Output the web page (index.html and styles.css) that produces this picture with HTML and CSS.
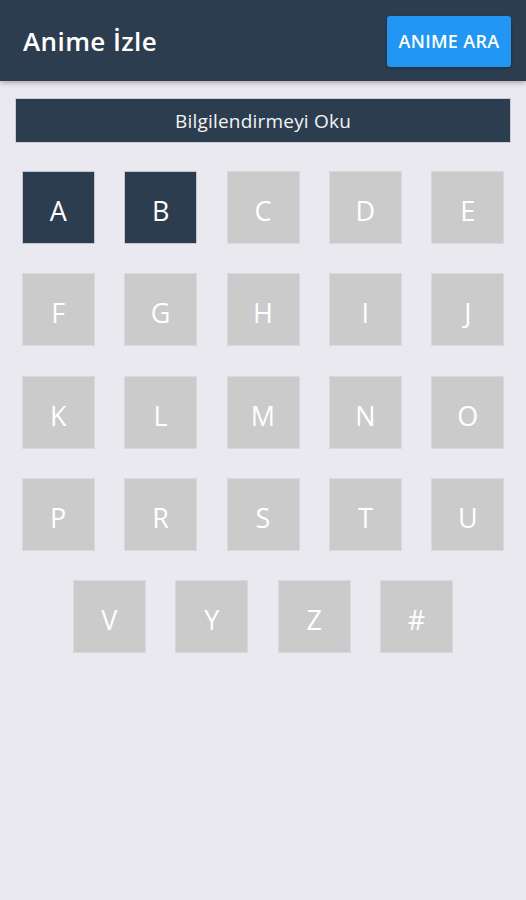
FILE: index.html
```html
<!DOCTYPE html>
<html lang="tr">
<head>
<meta charset="utf-8">
<title>Anime İzle</title>
<link rel="stylesheet" href="styles.css">
</head>
<body>
<header class="appbar">
  <h1 class="appbar-title">Anime İzle</h1>
  <button class="search-btn">ANIME ARA</button>
</header>
<main class="content">
  <div class="info-bar">Bilgilendirmeyi Oku</div>
  <div class="letters">
    <div class="tile tile-active">A</div>
    <div class="tile tile-active">B</div>
    <div class="tile">C</div>
    <div class="tile">D</div>
    <div class="tile">E</div>
    <div class="tile">F</div>
    <div class="tile">G</div>
    <div class="tile">H</div>
    <div class="tile">I</div>
    <div class="tile">J</div>
    <div class="tile">K</div>
    <div class="tile">L</div>
    <div class="tile">M</div>
    <div class="tile">N</div>
    <div class="tile">O</div>
    <div class="tile">P</div>
    <div class="tile">R</div>
    <div class="tile">S</div>
    <div class="tile">T</div>
    <div class="tile">U</div>
    <div class="tile">V</div>
    <div class="tile">Y</div>
    <div class="tile">Z</div>
    <div class="tile">#</div>
  </div>
</main>
</body>
</html>
```
FILE: styles.css
```css
* { box-sizing: border-box; }
html, body {
  margin: 0;
  padding: 0;
  background: #eae9ef;
  font-family: "Open Sans", "Noto Sans", sans-serif;
  width: 526px;
  height: 900px;
  overflow: hidden;
}
.appbar {
  height: 81px;
  background: #2c3d50;
  display: flex;
  align-items: center;
  justify-content: space-between;
  padding: 0 15px 0 23px;
  box-shadow: 0 2px 5px rgba(0,0,0,0.28);
  position: relative;
  z-index: 1;
}
.appbar-title {
  margin: 0;
  color: #ffffff;
  font-size: 26px;
  font-weight: 600;
  letter-spacing: 0.4px;
}
.search-btn {
  width: 124px;
  height: 51px;
  margin-top: 1px;
  background: #2196f3;
  border: none;
  border-radius: 3px;
  color: #ffffff;
  font-family: inherit;
  font-size: 18px;
  font-weight: 600;
  letter-spacing: 0.3px;
  padding: 0;
  box-shadow: 0 1px 3px rgba(0,0,0,0.3);
}
.content {
  padding: 17px 15px 0 15px;
}
.info-bar {
  height: 45px;
  background: #2c3d50;
  border: 1px solid #c9ccd6;
  color: #f4f4f4;
  font-size: 19px;
  letter-spacing: 0.2px;
  display: flex;
  align-items: center;
  justify-content: center;
  padding-top: 1px;
}
.letters {
  width: 483px;
  margin: 28px auto 0 auto;
  display: flex;
  flex-wrap: wrap;
  justify-content: center;
  gap: 29.25px 29.4px;
}
.tile {
  width: 73px;
  height: 73px;
  background: #cbcbcb;
  border: 1px solid #d9d8de;
  color: #ffffff;
  font-size: 27px;
  display: flex;
  align-items: center;
  justify-content: center;
  padding-top: 6px;
}
.tile-active {
  background: #2c3d50;
  border-color: #c4c7d0;
}
```
